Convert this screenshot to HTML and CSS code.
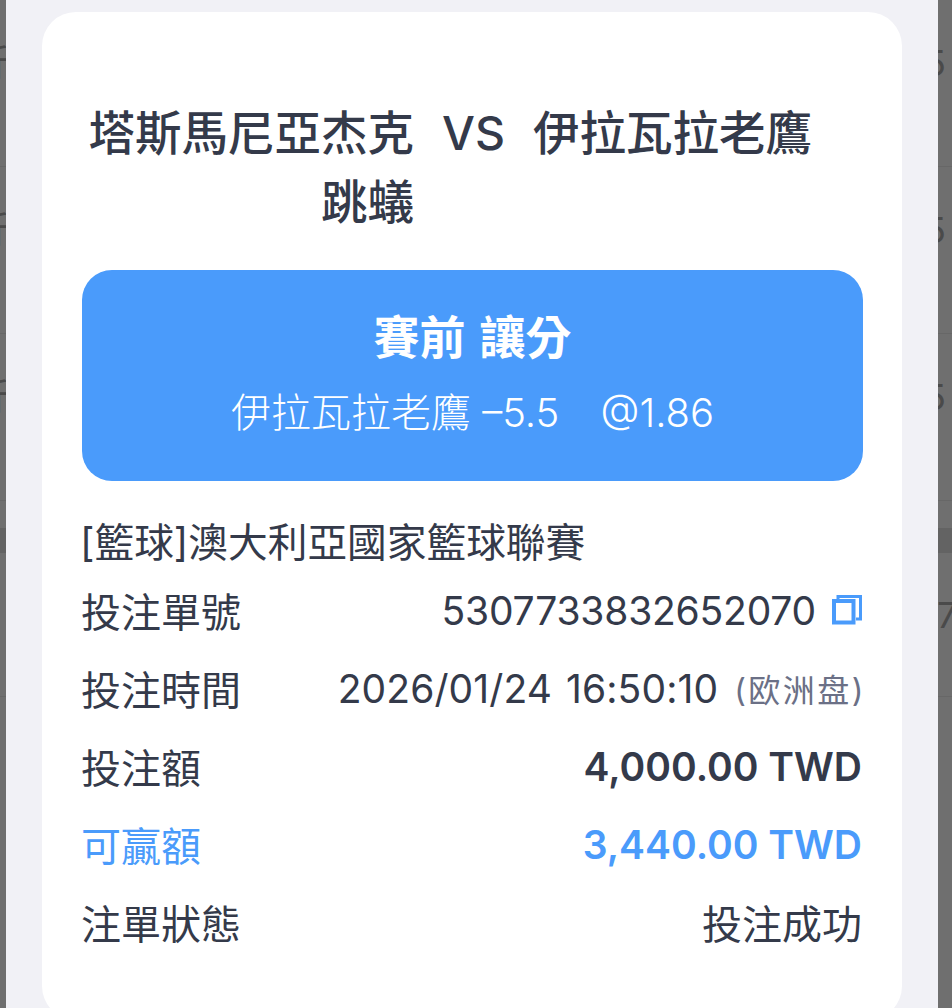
FILE: index.html
```html
<!DOCTYPE html>
<html lang="zh-Hant">

<head>
    <meta charset="UTF-8">
    <meta name="viewport" content="width=device-width, initial-scale=1.0">
    <title>注單詳情</title>
    <link rel="stylesheet" href="styles.css">
</head>

<body>
    <div id="wrap">
        <div class="strip left">
            <div class="cell">斤</div>
            <div class="cell">斤</div>
            <div class="cell">斤</div>
            <div class="band"></div>
            <div class="cell tall"></div>
        </div>

        <div class="sheet">
            <div class="card">
                <div class="match">
                    <div class="home">塔斯馬尼亞杰克跳蟻</div>
                    <div class="vs">VS</div>
                    <div class="away">伊拉瓦拉老鷹</div>
                </div>

                <div class="pick">
                    <div class="pick-title">賽前 讓分</div>
                    <div class="pick-line">伊拉瓦拉老鷹 –5.5 <span class="odds">@1.86</span></div>
                </div>

                <div class="league">[籃球]澳大利亞國家籃球聯賽</div>

                <div class="row">
                    <span class="label">投注單號</span>
                    <span class="val">
                        <span class="num">5307733832652070</span>
                        <svg class="copy" viewBox="0 0 30 30" width="30" height="30">
                            <path d="M6 4V1.500h22.500V24H24" fill="none" stroke="#4a9bfb" stroke-width="3"/>
                            <rect x="2" y="6" width="19.500" height="21.500" fill="none" stroke="#4a9bfb" stroke-width="4"/>
                        </svg>
                    </span>
                </div>
                <div class="row">
                    <span class="label">投注時間</span>
                    <span class="val">
                        <span class="num time">2026/01/24 16:50:10</span>
                        <span class="note">(欧洲盘)</span>
                    </span>
                </div>
                <div class="row">
                    <span class="label">投注額</span>
                    <span class="val strong">4,000.00 TWD</span>
                </div>
                <div class="row win">
                    <span class="label">可贏額</span>
                    <span class="val strong">3,440.00 TWD</span>
                </div>
                <div class="row">
                    <span class="label">注單狀態</span>
                    <span class="val">投注成功</span>
                </div>
            </div>
        </div>

        <div class="strip right">
            <div class="cell">5</div>
            <div class="cell">5</div>
            <div class="cell">5</div>
            <div class="band"></div>
            <div class="cell tall">7</div>
        </div>
    </div>
</body>

</html>
```

FILE: styles.css
```css
* {
    box-sizing: border-box;
}

html,
body {
    margin: 0;
    height: 1008px;
    overflow: hidden;
}

body {
    font-family: "Inter", "Noto Sans CJK TC", sans-serif;
    color: #343a4a;
}

#wrap {
    display: flex;
    height: 1008px;
    background: #f1f1f6;
}

/* dimmed page behind the sheet */
.strip {
    overflow: hidden;
    background: #6f6f6f;
    color: #4a4a4a;
    font-size: 36px;
    line-height: 36px;
    white-space: nowrap;
}

.strip.left {
    width: 6px;
}

.strip.right {
    width: 14px;
}

.cell {
    height: 167px;
    padding-top: 45px;
    border-bottom: 1px solid #676767;
}

.strip.left .cell {
    margin-left: -24px;
}

.strip.right .cell {
    margin-left: -14px;
}

.band {
    height: 25px;
    margin-top: 27px;
    background: #636363;
}

.cell.tall {
    height: 144px;
    padding-top: 44px;
}

.strip.right .cell.tall {
    margin-left: -1px;
}

.sheet {
    flex: 1;
    padding: 12px 36px 0;
}

.card {
    height: 1008px;
    padding: 87px 39px 0 40px;
    background: #fff;
    border-radius: 34px;
}

.match {
    display: flex;
    gap: 28px;
    height: 70px;
    padding-left: 6px;
    font-size: 46.500px;
    font-weight: 500;
    line-height: 69px;
}

.home {
    width: 326px;
    text-align: right;
}

.vs {
    white-space: nowrap;
}

.away {
    white-space: nowrap;
}

.pick {
    height: 211px;
    margin-top: 101px;
    padding-top: 37px;
    background: #4a9bfb;
    border-radius: 30px;
    color: #fff;
    text-align: center;
}

.pick-title {
    font-size: 46px;
    font-weight: 700;
    line-height: 60px;
    word-spacing: 3px;
}

.pick-line {
    margin-top: 20px;
    font-size: 40px;
    font-weight: 300;
    line-height: 52px;
}

.odds {
    margin-left: 30px;
}

.league {
    margin-top: 36px;
    margin-left: -2px;
    font-size: 39.700px;
    line-height: 52px;
}

.row {
    display: flex;
    justify-content: space-between;
    align-items: center;
    height: 78px;
    padding-right: 1px;
    font-size: 40px;
}

.league + .row {
    margin-top: 2px;
}

.label {
    margin-left: -1px;
}

.val {
    display: flex;
    align-items: center;
    gap: 16px;
}

.num {
    font-size: 39px;
    letter-spacing: -0.2px;
}

.time {
    letter-spacing: 0.100px;
    word-spacing: 3px;
}

.strong {
    font-size: 39px;
    font-weight: 600;
}

.win {
    color: #4a9bfb;
}

.note {
    margin-right: -4px;
    color: #6b7086;
    font-size: 32px;
    letter-spacing: 2.500px;
}

.copy {
    width: 30px;
    height: 30px;
}
```
